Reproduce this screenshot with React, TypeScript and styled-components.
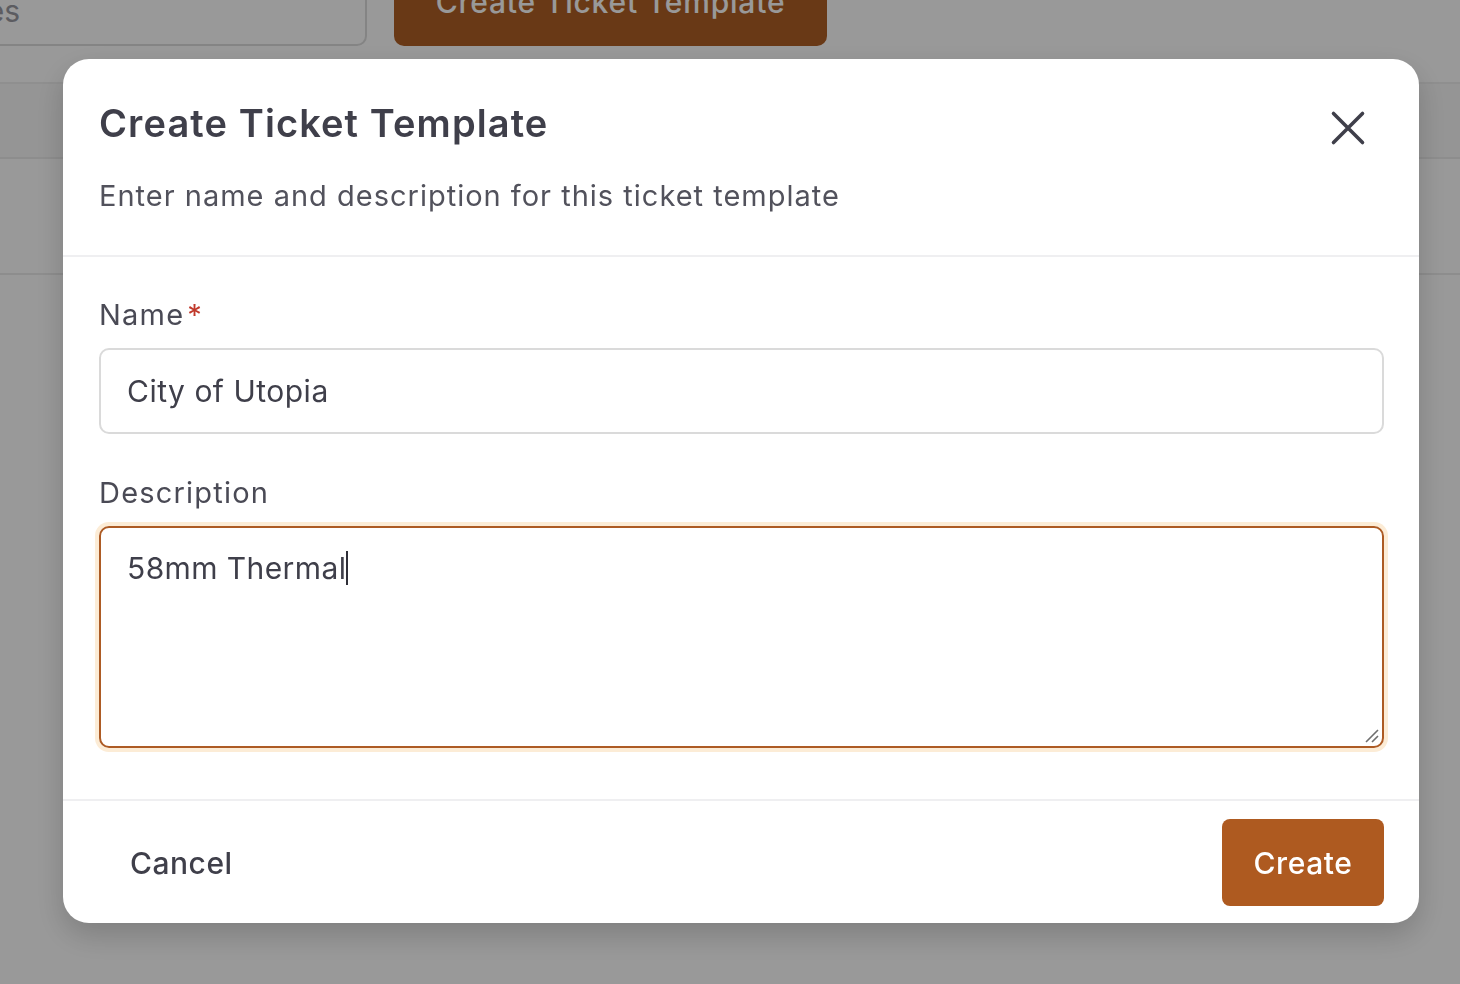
import styled, { createGlobalStyle } from "styled-components";

const GlobalStyle = createGlobalStyle`
    html, body {
        margin: 0;
        padding: 0;
        background: #ffffff;
        font-family: Inter, "Noto Sans", sans-serif;
        overflow: hidden;
    }
`;

const Page = styled.div`
    width: 1460px;
    height: 984px;
    overflow: hidden;
`;

const Toolbar = styled.div`
    display: flex;
    align-items: flex-end;
    gap: 27px;
    margin: -40px 0 0 -78px;
    height: 86px;
    border-bottom: 2px solid #efefef;
    padding-bottom: 36px;
`;

const SearchBox = styled.div`
    width: 445px;
    height: 84px;
    border: 2px solid #dcdcdc;
    border-radius: 10px;
    box-sizing: border-box;
    display: flex;
    align-items: center;
    justify-content: flex-end;
    padding: 0 345px 22px 0;
    color: #9a9aa2;
    font-size: 30px;
`;

const PageButton = styled.div`
    width: 433px;
    height: 86px;
    border-radius: 10px;
    background: #b05f26;
    color: #ffffff;
    font-size: 30px;
    font-weight: 500;
    letter-spacing: 0.8px;
    display: flex;
    align-items: center;
    justify-content: center;
    padding-bottom: 2px;
    box-sizing: border-box;
`;

const TableHead = styled.div`
    height: 73px;
    background: #f8f8f8;
    border-bottom: 2px solid #ececec;
`;

const TableRow = styled.div`
    height: 114px;
    border-bottom: 2px solid #ececec;
`;

const Overlay = styled.div`
    position: fixed;
    inset: 0;
    background: rgba(0, 0, 0, 0.4);
    display: flex;
    align-items: flex-start;
    padding: 59px 41px 0 63px;
`;

const Modal = styled.div`
    width: 1356px;
    background: #ffffff;
    border-radius: 26px;
    box-shadow: 0 12px 30px rgba(0, 0, 0, 0.18);
    overflow: hidden;
`;

const Header = styled.div`
    position: relative;
    padding: 40px 36px 39px;
    border-bottom: 2px solid #efeff1;
`;

const Title = styled.h2`
    margin: 0;
    font-size: 38px;
    line-height: 48px;
    font-weight: 600;
    color: #3f3f4a;
    letter-spacing: 1.1px;
`;

const Subtitle = styled.p`
    margin: 29px 0 0;
    font-size: 29px;
    line-height: 40px;
    color: #52525c;
    letter-spacing: 1px;
`;

const CloseButton = styled.button`
    position: absolute;
    top: 51px;
    right: 53px;
    width: 36px;
    height: 36px;
    border: none;
    background: none;
    padding: 0;
    cursor: pointer;
    display: flex;
    align-items: center;
    justify-content: center;
`;

const Body = styled.div`
    padding: 38px 35px 51px 36px;
    display: flex;
    flex-direction: column;
`;

const Label = styled.label<{ $gapTop?: number }>`
    font-size: 29px;
    line-height: 40px;
    color: #4a4a55;
    letter-spacing: 1.2px;
    margin-top: ${(p) => p.$gapTop ?? 0}px;
    margin-bottom: 13px;
`;

const Required = styled.span`
    color: #c0392b;
    margin-left: 3px;
`;

const TextInput = styled.input`
    height: 86px;
    box-sizing: border-box;
    border: 2px solid #dadada;
    border-radius: 10px;
    padding: 0 26px;
    font-family: inherit;
    font-size: 30px;
    color: #3f3f4a;
    letter-spacing: 0.5px;
    outline: none;
`;

const TextArea = styled.div`
    position: relative;
    height: 222px;
    box-sizing: border-box;
    border: 2px solid #ad5b24;
    border-radius: 10px;
    box-shadow: 0 0 0 4px #fcecd6;
    padding: 20px 26px;
    font-size: 30px;
    line-height: 40px;
    color: #3f3f4a;
    letter-spacing: 0.4px;
`;

const Caret = styled.span`
    display: inline-block;
    width: 2px;
    height: 34px;
    background: #2f2f38;
    vertical-align: -6px;
    margin-left: 0;
`;

const Grip = styled.svg`
    position: absolute;
    right: 2px;
    bottom: 2px;
`;

const Footer = styled.div`
    display: flex;
    justify-content: space-between;
    align-items: center;
    padding: 18px 35px 17px 36px;
    border-top: 2px solid #efeff1;
`;

const GhostButton = styled.button`
    height: 87px;
    padding: 0 31px;
    border: none;
    background: none;
    font-family: inherit;
    font-size: 30px;
    font-weight: 500;
    color: #3f3f4a;
    letter-spacing: 0.5px;
    cursor: pointer;
`;

const PrimaryButton = styled.button`
    width: 162px;
    height: 87px;
    border: none;
    border-radius: 8px;
    background: #ae5a20;
    font-family: inherit;
    font-size: 30px;
    font-weight: 500;
    color: #ffffff;
    letter-spacing: 0.6px;
    cursor: pointer;
`;

function App() {
    return (
        <>
            <GlobalStyle />
            <Page>
                <Toolbar>
                    <SearchBox>Search templates</SearchBox>
                    <PageButton>Create Ticket Template</PageButton>
                </Toolbar>
                <TableHead />
                <TableRow />
            </Page>
            <Overlay>
                <Modal>
                    <Header>
                        <Title>Create Ticket Template</Title>
                        <Subtitle>Enter name and description for this ticket template</Subtitle>
                        <CloseButton aria-label="Close">
                            <svg width="36" height="36" viewBox="0 0 36 36">
                                <path d="M3.5 3.5 L32.5 32.5 M32.5 3.5 L3.5 32.5" stroke="#3f3f4a" strokeWidth="3.6" strokeLinecap="round" />
                            </svg>
                        </CloseButton>
                    </Header>
                    <Body>
                        <Label>Name<Required>*</Required></Label>
                        <TextInput defaultValue="City of Utopia" />
                        <Label $gapTop={39}>Description</Label>
                        <TextArea>
                            58mm Thermal<Caret />
                            <Grip width="20" height="20" viewBox="0 0 20 20">
                                <path d="M6 18 L18 6 M12 18 L18 12" stroke="#6f6f6f" strokeWidth="1.6" />
                            </Grip>
                        </TextArea>
                    </Body>
                    <Footer>
                        <GhostButton>Cancel</GhostButton>
                        <PrimaryButton>Create</PrimaryButton>
                    </Footer>
                </Modal>
            </Overlay>
        </>
    );
}

export default App;
